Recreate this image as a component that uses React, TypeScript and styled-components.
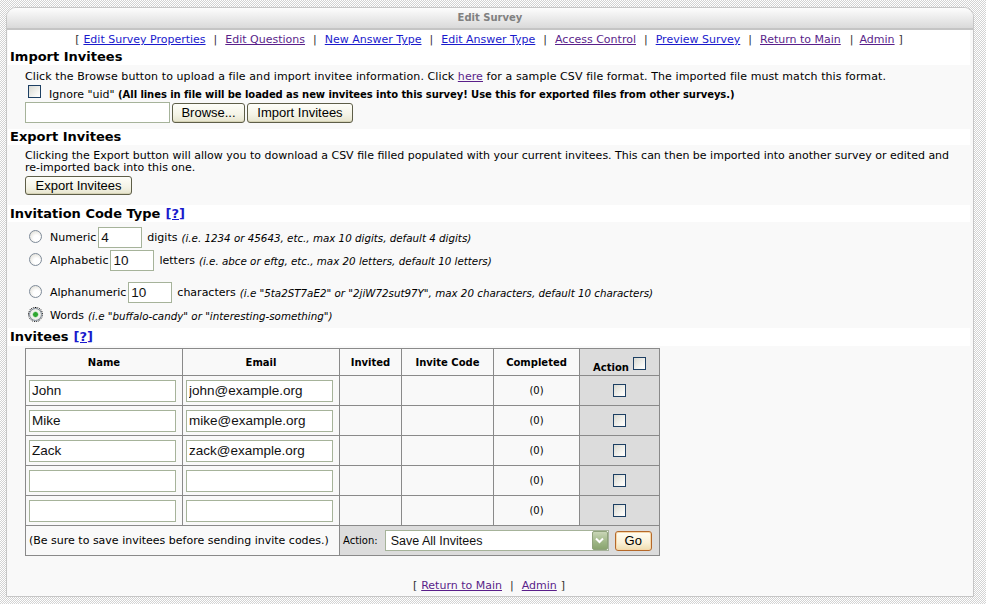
import React from 'react';
import styled, { createGlobalStyle } from 'styled-components';

const Global = createGlobalStyle`
  html, body { margin: 0; padding: 0; }
  body {
    background-color: #fff;
    background-image: repeating-conic-gradient(#d3d3d3 0 25%, #ffffff 0 50%);
    background-size: 2px 2px;
    font-family: "DejaVu Sans", Verdana, sans-serif;
    font-size: 11px;
    color: #000;
    min-height: 604px;
  }
`;

const Page = styled.div`
  padding: 7px 0 0 6px;
`;

const Panel = styled.div`
  width: 968px;
  box-sizing: border-box;
  border: 1px solid #c6c6c6;
  border-radius: 10px 10px 0 0;
  background: #f9f9f9;
  overflow: hidden;
`;

const Header = styled.div`
  height: 20px;
  line-height: 20px;
  text-align: center;
  font-weight: bold;
  font-size: 10px;
  color: #808080;
  background: linear-gradient(#fdfdfd, #e4e4e4 70%, #d9d9d9);
  border-bottom: 2px solid #c4c4c4;
`;

const Body = styled.div`
  padding: 0 3px 0 1px;
`;

const NavRow = styled.div<{ $footer?: boolean }>`
  height: ${(p) => (p.$footer ? '14px' : '17px')};
  line-height: ${(p) => (p.$footer ? '14px' : '18px')};
  padding-top: ${(p) => (p.$footer ? '0' : '1px')};
  text-align: center;
  background: ${(p) => (p.$footer ? 'transparent' : '#fff')};
  margin-top: ${(p) => (p.$footer ? '23px' : '0')};
  padding-bottom: ${(p) => (p.$footer ? '3px' : '0')};
  white-space: nowrap;
`;

const NavLink = styled.a<{ $visited?: boolean }>`
  color: ${(p) => (p.$visited ? '#5a1f8a' : '#1a1acc')};
  text-decoration: underline;
  cursor: pointer;
`;

const Sep = styled.span<{ $tight?: boolean }>`
  color: #333;
  padding: ${(p) => (p.$tight ? '0 6px 0 9px' : '0 8px')};
`;

const Bracket = styled.span<{ $side: 'l' | 'r' }>`
  color: #333;
  padding: ${(p) => (p.$side === 'l' ? '0 4px 0 0' : '0 0 0 4px')};
`;

const Heading = styled.div<{ $h?: number }>`
  background: #fff;
  height: ${(p) => p.$h ?? 17}px;
  line-height: ${(p) => p.$h ?? 17}px;
  font-size: 13px;
  font-weight: bold;
  padding-left: 2px;
`;

const HelpLink = styled.a`
  color: #1a1acc;
  text-decoration: underline;
  margin-left: 5px;
`;

const Section = styled.div<{ $pt: number; $pb: number }>`
  padding: ${(p) => p.$pt}px 16px ${(p) => p.$pb}px 17px;
`;

const Para = styled.div<{ $lh?: number; $ls?: number }>`
  line-height: ${(p) => p.$lh ?? 13}px;
  letter-spacing: ${(p) => p.$ls ?? 0}px;
  white-space: nowrap;
`;

const InlineLink = styled.a`
  color: #5a1f8a;
  text-decoration: underline;
`;

const CheckRow = styled.div`
  display: flex;
  align-items: flex-end;
  height: 13px;
  margin-top: 2px;
  white-space: nowrap;
`;

const Check = styled.input.attrs({ type: 'checkbox' })`
  appearance: none;
  -webkit-appearance: none;
  width: 13px;
  height: 13px;
  margin: 0;
  box-sizing: border-box;
  border: 1px solid #1d3f63;
  background: linear-gradient(135deg, #d9d9d2, #f6f6f3 70%, #fff);
  flex: none;
`;

const CheckLabel = styled.span`
  margin-left: 8px;
  line-height: 11px;
  position: relative;
  top: 2px;
`;

const Bold = styled.b`
  font-size: 10px;
  letter-spacing: -0.07px;
`;

const FileRow = styled.div`
  display: flex;
  align-items: center;
  margin-top: 4px;
  gap: 2px;
`;

const TextInput = styled.input<{ $w: number }>`
  width: ${(p) => p.$w}px;
  height: 21px;
  box-sizing: border-box;
  margin: 0;
  border: 1px solid #a6b39a;
  background: #fff;
  font-family: "Liberation Sans", Arial, sans-serif;
  font-size: 13.5px;
  color: #111;
  padding: 0 2px;
  outline: none;
`;

const FileBox = styled.div`
  width: 145px;
  height: 21px;
  box-sizing: border-box;
  border: 1px solid #a6b39a;
  background: #fff;
`;

const Button = styled.button<{ $w: number; $h?: number }>`
  width: ${(p) => p.$w}px;
  height: ${(p) => p.$h ?? 20}px;
  box-sizing: border-box;
  margin: 0;
  padding: 0;
  border: 1px solid #5e5e48;
  border-radius: 3px;
  background: linear-gradient(#fefef9, #f4f3e6 60%, #e6e4cd);
  box-shadow: inset 0 -1px 0 #d6d3b6;
  font-family: "Liberation Sans", Arial, sans-serif;
  font-size: 13px;
  color: #000;
  cursor: pointer;
`;

const GoButton = styled.button`
  width: 37px;
  height: 20px;
  box-sizing: border-box;
  margin: 0 0 0 6px;
  padding: 0;
  border: 1px solid #b4682a;
  border-radius: 3px;
  background: linear-gradient(#fffdf4, #faf0d6 60%, #eedcae);
  box-shadow: inset 0 0 0 1px #f6d7a8;
  font-family: "Liberation Sans", Arial, sans-serif;
  font-size: 13px;
  color: #000;
`;

const ExportBtnRow = styled.div`
  margin-top: 2px;
  display: flex;
`;

const OptRow = styled.div<{ $mt: number; $h?: number }>`
  display: flex;
  align-items: center;
  height: ${(p) => p.$h ?? 21}px;
  margin-top: ${(p) => p.$mt}px;
  white-space: nowrap;
`;

const Radio = styled.input.attrs({ type: 'radio' })`
  appearance: none;
  -webkit-appearance: none;
  width: 13px;
  height: 13px;
  margin: 0 8px 0 4px;
  box-sizing: border-box;
  border: 1px solid #7f8b99;
  border-radius: 50%;
  background: radial-gradient(circle at 60% 65%, #ffffff 0 30%, #dedcd3 90%);
  flex: none;
  position: relative;
  top: -1px;
  &:checked {
    background: radial-gradient(circle, #2ea62e 0 2px, #9ad39a 2.6px, #f4f4f0 3.4px, #dedcd3 90%);
    outline: 1px dotted #000;
    outline-offset: 0;
  }
`;

const Hint = styled.i`
  margin-left: 4px;
  font-size: 10.3px;
`;

const Unit = styled.span`
  margin-left: 5px;
`;

const SmallInput = styled(TextInput)`
  margin-left: 2px;
`;

const TableWrap = styled.div`
  padding: 2px 0 0 17px;
`;

const Table = styled.table`
  border-collapse: collapse;
  table-layout: fixed;
  width: 634px;
  background: #f9f9f9;
  border: 1px solid #8a8a8a;
`;

const Th = styled.th<{ $action?: boolean }>`
  height: 26px;
  padding: 0;
  border: 1px solid #8a8a8a;
  font-size: 10px;
  font-weight: bold;
  text-align: center;
  vertical-align: middle;
  background: ${(p) => (p.$action ? '#dcdcdc' : '#f9f9f9')};
`;

const Td = styled.td<{ $action?: boolean; $center?: boolean }>`
  height: 29px;
  padding: 0 3px;
  border: 1px solid #8a8a8a;
  vertical-align: middle;
  text-align: ${(p) => (p.$center ? 'center' : 'left')};
  background: ${(p) => (p.$action ? '#dcdcdc' : '#f9f9f9')};
`;

const CellInput = styled(TextInput)`
  display: block;
  width: 147px;
  height: 22px;
`;

const Count = styled.span`
  font-size: 10px;
`;

const ActionHead = styled.span`
  display: inline-flex;
  align-items: flex-end;
  gap: 4px;
  position: relative;
  top: 1px;
`;

const ActionHeadText = styled.span`
  position: relative;
  top: 3px;
`;

const CenterCheck = styled(Check)`
  display: inline-block;
  vertical-align: middle;
`;

const FooterAction = styled.div`
  display: flex;
  align-items: center;
`;

const ActionLabel = styled.span`
  font-size: 10px;
  margin-right: 7px;
`;

const SelectWrap = styled.div`
  position: relative;
  width: 224px;
  height: 21px;
`;

const Select = styled.select`
  appearance: none;
  -webkit-appearance: none;
  width: 100%;
  height: 100%;
  box-sizing: border-box;
  margin: 0;
  border: 1px solid #a6b39a;
  background: #fff;
  font-family: "Liberation Sans", Arial, sans-serif;
  font-size: 12.5px;
  color: #111;
  padding: 0 0 0 5px;
  outline: none;
`;

const SelectArrow = styled.span`
  position: absolute;
  right: 1px;
  top: 1px;
  bottom: 1px;
  width: 16px;
  box-sizing: border-box;
  border: 1px solid #8fa27c;
  border-radius: 2px;
  background: linear-gradient(#c9d6b7, #9db585 60%, #8aa470);
  display: flex;
  align-items: center;
  justify-content: center;
  pointer-events: none;
`;

const FootNote = styled.span`
  white-space: nowrap;
`;

const navLinks = [
  { t: 'Edit Survey Properties', v: false },
  { t: 'Edit Questions', v: true },
  { t: 'New Answer Type', v: false },
  { t: 'Edit Answer Type', v: false },
  { t: 'Access Control', v: true },
  { t: 'Preview Survey', v: false },
  { t: 'Return to Main', v: true },
  { t: 'Admin', v: true },
];

const invitees = [
  { name: 'John', email: 'john@example.org' },
  { name: 'Mike', email: 'mike@example.org' },
  { name: 'Zack', email: 'zack@example.org' },
  { name: '', email: '' },
  { name: '', email: '' },
];

export default function App() {
  return (
    <>
      <Global />
      <Page>
        <Panel>
          <Header>Edit Survey</Header>
          <Body>
            <NavRow>
              <Bracket $side="l">[</Bracket>
              {navLinks.map((l, i) => (
                <React.Fragment key={l.t}>
                  {i > 0 && <Sep $tight={i === navLinks.length - 1}>|</Sep>}
                  <NavLink $visited={l.v}>{l.t}</NavLink>
                </React.Fragment>
              ))}
              <Bracket $side="r">]</Bracket>
            </NavRow>

            <Heading>Import Invitees</Heading>
            <Section $pt={5} $pb={6}>
              <Para $ls={0.09}>
                Click the Browse button to upload a file and import invitee information. Click{' '}
                <InlineLink>here</InlineLink> for a sample CSV file format. The imported file must match this format.
              </Para>
              <CheckRow>
                <Check style={{ marginLeft: 3 }} />
                <CheckLabel>
                  Ignore "uid"{' '}
                  <Bold>
                    (All lines in file will be loaded as new invitees into this survey! Use this for exported files
                    from other surveys.)
                  </Bold>
                </CheckLabel>
              </CheckRow>
              <FileRow>
                <FileBox />
                <Button $w={73}>Browse...</Button>
                <Button $w={106}>Import Invitees</Button>
              </FileRow>
            </Section>

            <Heading $h={16}>Export Invitees</Heading>
            <Section $pt={5} $pb={10}>
              <Para $lh={12}>
                Clicking the Export button will allow you to download a CSV file filled populated with your current
                invitees. This can then be imported into another survey or edited and
                <br />
                re-imported back into this one.
              </Para>
              <ExportBtnRow>
                <Button $w={107} $h={19}>
                  Export Invitees
                </Button>
              </ExportBtnRow>
            </Section>

            <Heading>
              Invitation Code Type<HelpLink>[?]</HelpLink>
            </Heading>
            <Section $pt={5} $pb={6}>
              <OptRow $mt={0}>
                <Radio name="code" />
                Numeric
                <SmallInput $w={44} defaultValue="4" />
                <Unit>digits</Unit>
                <Hint>(i.e. 1234 or 45643, etc., max 10 digits, default 4 digits)</Hint>
              </OptRow>
              <OptRow $mt={2}>
                <Radio name="code" />
                Alphabetic
                <SmallInput $w={44} defaultValue="10" />
                <Unit>letters</Unit>
                <Hint>(i.e. abce or eftg, etc., max 20 letters, default 10 letters)</Hint>
              </OptRow>
              <OptRow $mt={11}>
                <Radio name="code" />
                Alphanumeric
                <SmallInput $w={44} defaultValue="10" />
                <Unit>characters</Unit>
                <Hint>(i.e "5ta2ST7aE2" or "2jiW72sut97Y", max 20 characters, default 10 characters)</Hint>
              </OptRow>
              <OptRow $mt={6} $h={13}>
                <Radio name="code" defaultChecked />
                Words
                <Hint>(i.e "buffalo-candy" or "interesting-something")</Hint>
              </OptRow>
            </Section>

            <Heading $h={18}>
              Invitees<HelpLink>[?]</HelpLink>
            </Heading>
            <TableWrap>
              <Table>
                <colgroup>
                  <col style={{ width: 157 }} />
                  <col style={{ width: 157 }} />
                  <col style={{ width: 62 }} />
                  <col style={{ width: 92 }} />
                  <col style={{ width: 86 }} />
                  <col style={{ width: 80 }} />
                </colgroup>
                <thead>
                  <tr>
                    <Th>Name</Th>
                    <Th>Email</Th>
                    <Th>Invited</Th>
                    <Th>Invite Code</Th>
                    <Th>Completed</Th>
                    <Th $action>
                      <ActionHead>
                        <ActionHeadText>Action</ActionHeadText>
                        <Check />
                      </ActionHead>
                    </Th>
                  </tr>
                </thead>
                <tbody>
                  {invitees.map((r, i) => (
                    <tr key={i}>
                      <Td>
                        <CellInput $w={147} defaultValue={r.name} />
                      </Td>
                      <Td>
                        <CellInput $w={147} defaultValue={r.email} />
                      </Td>
                      <Td />
                      <Td />
                      <Td $center>
                        <Count>(0)</Count>
                      </Td>
                      <Td $action $center>
                        <CenterCheck />
                      </Td>
                    </tr>
                  ))}
                  <tr>
                    <Td colSpan={2}>
                      <FootNote>(Be sure to save invitees before sending invite codes.)</FootNote>
                    </Td>
                    <Td colSpan={4} $action>
                      <FooterAction>
                        <ActionLabel>Action:</ActionLabel>
                        <SelectWrap>
                          <Select defaultValue="save">
                            <option value="save">Save All Invitees</option>
                            <option value="send">Send Invite Codes</option>
                          </Select>
                          <SelectArrow>
                            <svg width="9" height="7" viewBox="0 0 9 7">
                              <path d="M1 1.5 L4.5 5 L8 1.5" stroke="#fff" strokeWidth="2" fill="none" />
                            </svg>
                          </SelectArrow>
                        </SelectWrap>
                        <GoButton>Go</GoButton>
                      </FooterAction>
                    </Td>
                  </tr>
                </tbody>
              </Table>
            </TableWrap>

            <NavRow $footer>
              <Bracket $side="l">[</Bracket>
              <NavLink $visited>Return to Main</NavLink>
              <Sep>|</Sep>
              <NavLink $visited>Admin</NavLink>
              <Bracket $side="r">]</Bracket>
            </NavRow>
          </Body>
        </Panel>
      </Page>
    </>
  );
}
